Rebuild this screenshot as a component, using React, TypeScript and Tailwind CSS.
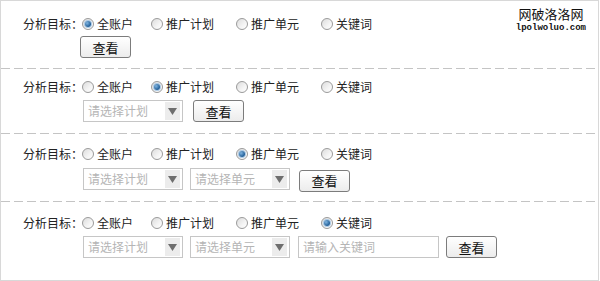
import type { ReactNode } from "react";

const options = ["全账户", "推广计划", "推广单元", "关键词"];
// spacing between the radio items, measured from the label end
const optionGaps = ["ml-[1px]", "ml-[13px]", "ml-[13px]", "ml-[13px]"];
const optionWidths = ["w-[56px]", "w-[72px]", "w-[72px]", "w-[60px]"];

function Radio({ checked }: { checked: boolean }) {
  return (
    <span className="relative inline-flex w-[12px] h-[12px] rounded-full border border-[#9a9a9a] bg-[linear-gradient(135deg,#dcdcdc,#f4f4f4_60%,#ffffff)] items-center justify-center shrink-0">
      {checked && (
        <span className="w-[6px] h-[6px] rounded-full bg-[radial-gradient(circle_at_35%_35%,#7fb4e0,#1e5c96_70%)] shadow-[0_0_0_1px_#a9c8e4]" />
      )}
    </span>
  );
}

function RadioRow({ active }: { active: number }) {
  return (
    <div className="flex items-center h-[16px] pl-[22px] text-[12px] text-[#222]">
      <span className="w-[58px] shrink-0 whitespace-nowrap">分析目标：</span>
      {options.map((o, i) => (
        <label key={o} className={`flex shrink-0 items-center gap-[3px] ${optionGaps[i]} ${optionWidths[i]}`}>
          <Radio checked={i === active} />
          <span className="whitespace-nowrap">{o}</span>
        </label>
      ))}
    </div>
  );
}

function Select({ placeholder }: { placeholder: string }) {
  return (
    <div className="flex items-center w-[100px] h-[22px] border border-[#c6c6c6] bg-white">
      <span className="flex-1 pl-[4px] text-[12px] text-[#b5b5b5] leading-none">{placeholder}</span>
      <span className="flex items-center justify-center w-[15px] h-[18px] mr-[2px] bg-[#ececec]">
        <svg width="9" height="7" viewBox="0 0 9 7">
          <path d="M0 0 H9 L4.5 7 Z" fill="#6e6e6e" />
        </svg>
      </span>
    </div>
  );
}

function Button() {
  return (
    <button className="w-[51px] h-[22px] rounded-[3px] border border-[#7c7c7c] bg-[linear-gradient(#ffffff,#ececec)] text-[13px] text-[#111] leading-none">
      查看
    </button>
  );
}

function Dashed() {
  return (
    <div className="h-px w-full bg-[linear-gradient(to_right,#c4c4c4_70%,transparent_0)] bg-[length:13px_1px] bg-repeat-x" />
  );
}

function Section({ pt, h, children }: { pt: string; h: string; children: ReactNode }) {
  return <div className={`flex flex-col ${pt} ${h}`}>{children}</div>;
}

export default function App() {
  return (
    <div
      className="relative w-[599px] h-[281px] border border-[#d8d8d8] bg-white overflow-hidden"
      style={{ fontFamily: '"Noto Sans CJK SC", "Liberation Sans", sans-serif' }}
    >
      {/* watermark */}
      <div className="absolute right-[12px] top-[6px] flex flex-col items-center leading-none">
        <span className="text-[13px] text-[#111]">网破洛洛网</span>
        <span className="mt-[4px] text-[9px] font-bold text-[#111]" style={{ fontFamily: '"Liberation Mono", monospace' }}>
          lpolwoluo.com
        </span>
      </div>

      <Section pt="pt-[15px]" h="h-[67px]">
        <RadioRow active={0} />
        <div className="flex mt-[4px] pl-[79px]">
          <Button />
        </div>
      </Section>
      <Dashed />
      <Section pt="pt-[10px]" h="h-[64px]">
        <RadioRow active={1} />
        <div className="flex items-center gap-[10px] mt-[5px] pl-[82px]">
          <Select placeholder="请选择计划" />
          <Button />
        </div>
      </Section>
      <Dashed />
      <Section pt="pt-[12px]" h="h-[67px]">
        <RadioRow active={2} />
        <div className="flex items-center gap-[7px] mt-[5px] pl-[82px]">
          <Select placeholder="请选择计划" />
          <Select placeholder="请选择单元" />
          <div className="ml-[2px]">
            <Button />
          </div>
        </div>
      </Section>
      <Dashed />
      <Section pt="pt-[13px]" h="h-[76px]">
        <RadioRow active={3} />
        <div className="flex items-center gap-[7px] mt-[5px] pl-[82px]">
          <Select placeholder="请选择计划" />
          <Select placeholder="请选择单元" />
          <div className="ml-[1px] flex items-center w-[141px] h-[22px] border border-[#c6c6c6] pl-[4px] text-[12px] text-[#b5b5b5]">
            请输入关键词
          </div>
          <Button />
        </div>
      </Section>
    </div>
  );
}
